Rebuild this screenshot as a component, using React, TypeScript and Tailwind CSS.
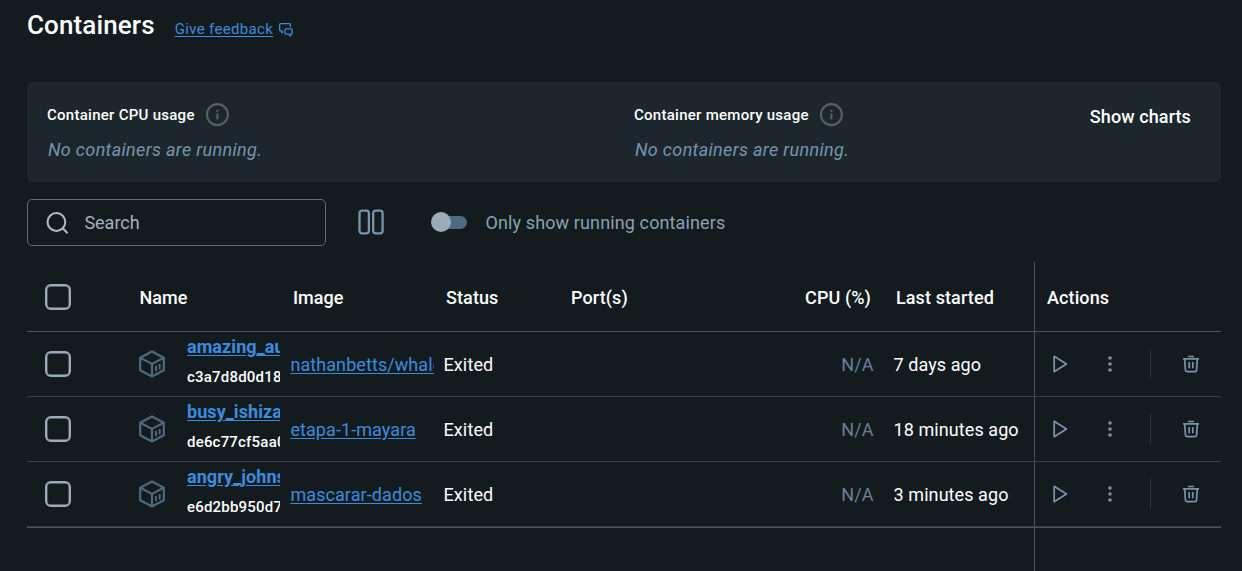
import React from "react";

type Container = {
  name: string;
  id: string;
  image: string;
  status: string;
  started: string;
};

const containers: Container[] = [
  { name: "amazing_austin", id: "c3a7d8d0d18f", image: "nathanbetts/whale", status: "Exited", started: "7 days ago" },
  { name: "busy_ishizaka", id: "de6c77cf5aa0", image: "etapa-1-mayara", status: "Exited", started: "18 minutes ago" },
  { name: "angry_johnson", id: "e6d2bb950d7c", image: "mascarar-dados", status: "Exited", started: "3 minutes ago" },
];

const columns =
  "grid grid-cols-[110px_153px_153px_125px_315px_151px_187px]";

function FeedbackIcon() {
  return (
    <svg width="16" height="16" viewBox="0 0 16 16" fill="none" stroke="#3b8cdf" strokeWidth="1.3" strokeLinejoin="round">
      <path d="M5.2 9.6 3.9 10.9V8.9H2.9Q1.6 8.9 1.6 7.6V3Q1.6 1.7 2.9 1.7H11.1Q12.4 1.7 12.4 3V5.2" />
      <path d="M8.2 6.8H12.8Q14.1 6.8 14.1 8V11Q14.1 12.2 12.9 12.2H12.5V14L10.6 12.2H8.2Q7 12.2 7 11V8Q7 6.8 8.2 6.8Z" />
    </svg>
  );
}

function InfoIcon() {
  return (
    <svg width="24" height="24" viewBox="0 0 24 24" fill="none" stroke="#566068">
      <circle cx="12.4" cy="11.6" r="10.5" strokeWidth="2.1" />
      <path d="M12.4 10.6v5.8M12.4 6.8v2" strokeWidth="2" />
    </svg>
  );
}

function SearchIcon() {
  return (
    <svg width="24" height="24" viewBox="0 0 24 24" fill="none" stroke="#b1bcc4" strokeWidth="2">
      <circle cx="11.4" cy="11" r="8.9" />
      <path d="m17.7 17.3 4.9 4.9" />
    </svg>
  );
}

function ColumnsIcon() {
  return (
    <svg width="28" height="28" viewBox="0 0 28 28" fill="none" stroke="#7794ab" strokeWidth="2.3">
      <rect x="2.5" y="2.7" width="9.4" height="22.6" rx="2.5" />
      <rect x="16.2" y="2.7" width="9.4" height="22.6" rx="2.5" />
    </svg>
  );
}

function CubeIcon() {
  return (
    <svg width="28" height="28" viewBox="0 0 28 28" fill="none" stroke="#4f697e" strokeWidth="2.2" strokeLinejoin="round">
      <path d="M14 1.6 25.8 7.7V20.3L14 26.4 2.2 20.3V7.7Z" />
      <path d="M2.2 7.7 14 13.9 25.8 7.7M14 13.9V26.4" />
      <path d="M18 15.7V21.2M21.6 14V19.5" strokeWidth="1.9" />
    </svg>
  );
}

function PlayIcon() {
  return (
    <svg width="20" height="20" viewBox="0 0 20 20" fill="none" stroke="#7794ab" strokeWidth="1.7" strokeLinejoin="round">
      <path d="M4.2 2.3V17.7L16.4 10Z" />
    </svg>
  );
}

function MoreIcon() {
  return (
    <svg width="20" height="20" viewBox="0 0 20 20" fill="#7794ab">
      <circle cx="10" cy="4" r="1.8" />
      <circle cx="10" cy="10" r="1.8" />
      <circle cx="10" cy="16" r="1.8" />
    </svg>
  );
}

function TrashIcon() {
  return (
    <svg width="20" height="20" viewBox="0 0 20 20" fill="none" stroke="#7794ab" strokeWidth="1.7">
      <path d="M7 2.5h6M2 4.8h16" />
      <path d="M3.7 4.8 4.4 15.9Q4.5 17.6 6.2 17.6H13.8Q15.5 17.6 15.6 15.9L16.3 4.8" />
      <path d="M8.2 8v6.3M11.8 8v6.3" />
    </svg>
  );
}

function Checkbox() {
  return <div className="ml-[18px] size-[26px] rounded-[6px] border-2 border-[#9bacb9] shadow-[inset_0_0_0_0.4px_#9bacb9]" />;
}

function Usage({ title }: { title: string }) {
  return (
    <div className="flex w-[587px] flex-col">
      <div className="flex h-[25px] items-center gap-[10px]">
        <span className="mt-px text-[15px] leading-5 font-medium tracking-[0.27px] text-white">{title}</span>
        <InfoIcon />
      </div>
      <span className="mt-[11px] ml-px text-lg leading-6 tracking-[0.34px] text-[#7794ab] italic">No containers are running.</span>
    </div>
  );
}

function HeaderCell({ children, className = "" }: { children: React.ReactNode; className?: string }) {
  return <div className={`pt-0.5 ${className}`}>{children}</div>;
}

function Row({ item }: { item: Container }) {
  return (
    <div className={`${columns} h-[65px] items-stretch border-b border-[#37424b] text-lg tracking-[0.07px] text-white`}>
      <div className="flex items-center"><Checkbox /></div>
      <div className="flex items-center overflow-hidden pl-px">
        <CubeIcon />
        <div className="mb-1 ml-[21px] w-[93px] overflow-hidden whitespace-nowrap">
          <a className="block h-[30px] text-lg leading-[30px] font-bold text-[#3b8cdf] underline underline-offset-2">{item.name}</a>
          <span className="block h-[30px] text-[15px] leading-[30px] font-medium tracking-[0.2px]">{item.id}</span>
        </div>
      </div>
      <div className="flex items-center pt-0.5">
        <a className="w-[144px] overflow-hidden pl-[0.4px] tracking-[0.08px] whitespace-nowrap text-[#3b8cdf] underline underline-offset-2">{item.image}</a>
      </div>
      <div className="flex items-center pt-0.5 pl-[0.4px] tracking-[0.15px]">{item.status}</div>
      <div className="flex items-center justify-end pt-0.5 pr-[9.5px] text-[#6a8093]">N/A</div>
      <div className="flex items-center pt-0.5 pl-[10.6px] whitespace-nowrap">{item.started}</div>
      <div className="flex items-center border-l border-[#4c5358] pl-[15px]">
        <PlayIcon />
        <span className="ml-[30px]"><MoreIcon /></span>
        <span className="ml-[30px] h-[30px] w-px bg-[#2e383f]" />
        <span className="ml-[30px]"><TrashIcon /></span>
      </div>
    </div>
  );
}

export default function App() {
  return (
    <main className="flex h-[571px] w-[1242px] flex-col overflow-hidden bg-[#141b1f] pr-[21px] pl-[27px] font-['Roboto',sans-serif]">
      <header className="flex h-[82px] items-start">
        <h1 className="mt-[9px] text-[26px] leading-8 font-medium tracking-[0.12px] text-white">Containers</h1>
        <a className="mt-[19px] ml-5 text-[15px] leading-5 tracking-[0.34px] text-[#3b8cdf] underline underline-offset-2">Give feedback</a>
        <span className="mt-[22px] ml-[4.5px]"><FeedbackIcon /></span>
      </header>

      <section className="flex h-[100px] shrink-0 rounded-[5px] bg-[#1c272d] pt-5 pr-[30px] pl-5">
        <Usage title="Container CPU usage" />
        <Usage title="Container memory usage" />
        <button className="-ml-[150px] flex h-[30px] flex-1 items-center justify-end text-lg font-medium tracking-[0.1px] whitespace-nowrap text-white">Show charts</button>
      </section>

      <div className="mt-[17px] flex h-[47px] shrink-0 items-center">
        <div className="flex h-[47px] w-[299px] items-center gap-[15px] rounded-[5px] border border-[#566f83] pl-[17.4px] text-lg text-[#a4b1bb]">
          <SearchIcon />
          <span>Search</span>
        </div>
        <span className="mb-px ml-[31px]"><ColumnsIcon /></span>
        <div className="mb-px ml-[46px] flex w-9 items-center">
          <span className="z-10 size-5 shrink-0 rounded-full bg-[#9bacb9]" />
          <span className="-ml-[17px] h-[13px] w-[33px] rounded-full bg-[#4c6a82]" />
        </div>
        <span className="ml-[18.5px] text-lg tracking-[0.12px] text-[#8ba0b0]">Only show running containers</span>
      </div>

      <section className="mt-4 flex flex-1 flex-col">
        <div className={`${columns} h-[70px] shrink-0 items-center border-b border-[#4c5358] text-lg font-medium text-white`}>
          <Checkbox />
          <HeaderCell className="pl-[2.5px]">Name</HeaderCell>
          <HeaderCell className="pl-[3px]">Image</HeaderCell>
          <HeaderCell className="pl-[3px] tracking-[0.1px]">Status</HeaderCell>
          <div className="flex justify-between pt-0.5 pr-3 pl-[3px] whitespace-nowrap">
            <span className="tracking-[0.1px]">Port(s)</span>
            <span className="tracking-[0.1px]">CPU (%)</span>
          </div>
          <HeaderCell className="pl-[13px] tracking-[0.1px] whitespace-nowrap">Last started</HeaderCell>
          <div className="flex h-full items-center border-l border-[#4c5358] pt-0.5 pl-3 tracking-[0.1px]">Actions</div>
        </div>
        {containers.map((item) => (
          <Row key={item.id} item={item} />
        ))}
        <div className={`${columns} flex-1 border-t border-[#4c5358]`}>
          <div className="col-start-7 border-l border-[#4c5358]" />
        </div>
      </section>
    </main>
  );
}
